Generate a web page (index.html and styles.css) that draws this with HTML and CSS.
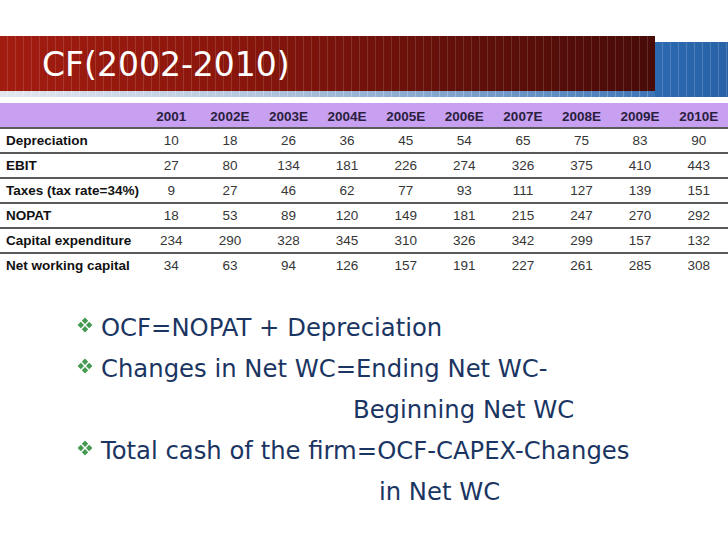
FILE: index.html
```html
<!DOCTYPE html>
<html lang="en">
<head>
<meta charset="utf-8">
<title>CF(2002-2010)</title>
<link rel="stylesheet" href="styles.css">
</head>
<body>
<div class="slide">
  <header class="banner">
    <div class="banner-main">
      <h1 class="title">CF(2002-2010)</h1>
      <div class="strip"></div>
    </div>
    <div class="banner-tab"></div>
  </header>

  <div class="table">
    <div class="row head">
      <span></span><span>2001</span><span>2002E</span><span>2003E</span><span>2004E</span><span>2005E</span><span>2006E</span><span>2007E</span><span>2008E</span><span>2009E</span><span>2010E</span>
    </div>
    <div class="row">
      <span class="label">Depreciation</span><span>10</span><span>18</span><span>26</span><span>36</span><span>45</span><span>54</span><span>65</span><span>75</span><span>83</span><span>90</span>
    </div>
    <div class="row">
      <span class="label">EBIT</span><span>27</span><span>80</span><span>134</span><span>181</span><span>226</span><span>274</span><span>326</span><span>375</span><span>410</span><span>443</span>
    </div>
    <div class="row">
      <span class="label">Taxes (tax rate=34%)</span><span>9</span><span>27</span><span>46</span><span>62</span><span>77</span><span>93</span><span>111</span><span>127</span><span>139</span><span>151</span>
    </div>
    <div class="row">
      <span class="label">NOPAT</span><span>18</span><span>53</span><span>89</span><span>120</span><span>149</span><span>181</span><span>215</span><span>247</span><span>270</span><span>292</span>
    </div>
    <div class="row">
      <span class="label">Capital expenditure</span><span>234</span><span>290</span><span>328</span><span>345</span><span>310</span><span>326</span><span>342</span><span>299</span><span>157</span><span>132</span>
    </div>
    <div class="row">
      <span class="label">Net working capital</span><span>34</span><span>63</span><span>94</span><span>126</span><span>157</span><span>191</span><span>227</span><span>261</span><span>285</span><span>308</span>
    </div>
  </div>

  <ul class="points">
    <li>
      <svg class="bullet" viewBox="0 0 16 16" aria-hidden="true"><path d="M8 0.6 L11.2 3.8 L8 7 L4.8 3.8 Z M3.8 4.8 L7 8 L3.8 11.2 L0.6 8 Z M12.2 4.8 L15.4 8 L12.2 11.2 L9 8 Z M8 9 L11.2 12.2 L8 15.4 L4.8 12.2 Z"/></svg>
      <span class="text">OCF=NOPAT + Depreciation</span>
    </li>
    <li>
      <svg class="bullet" viewBox="0 0 16 16" aria-hidden="true"><path d="M8 0.6 L11.2 3.8 L8 7 L4.8 3.8 Z M3.8 4.8 L7 8 L3.8 11.2 L0.6 8 Z M12.2 4.8 L15.4 8 L12.2 11.2 L9 8 Z M8 9 L11.2 12.2 L8 15.4 L4.8 12.2 Z"/></svg>
      <span class="text">Changes in Net WC=Ending Net WC-<span class="cont cont-1">Beginning Net WC</span></span>
    </li>
    <li>
      <svg class="bullet" viewBox="0 0 16 16" aria-hidden="true"><path d="M8 0.6 L11.2 3.8 L8 7 L4.8 3.8 Z M3.8 4.8 L7 8 L3.8 11.2 L0.6 8 Z M12.2 4.8 L15.4 8 L12.2 11.2 L9 8 Z M8 9 L11.2 12.2 L8 15.4 L4.8 12.2 Z"/></svg>
      <span class="text">Total cash of the firm=OCF-CAPEX-Changes<span class="cont cont-2">in Net WC</span></span>
    </li>
  </ul>
</div>
</body>
</html>
```

FILE: styles.css
```css
html, body {
  margin: 0;
  padding: 0;
  background: #ffffff;
}

.slide {
  width: 728px;
  height: 546px;
  overflow: hidden;
  box-sizing: border-box;
  padding-top: 36px;
  background: #ffffff;
}

/* ---------- banner ---------- */
.banner {
  display: flex;
  height: 61px;
}

.banner-main {
  width: 655px;
  display: flex;
  flex-direction: column;
}

.title {
  margin: 0;
  height: 55px;
  box-sizing: border-box;
  padding: 3px 0 0 42px;
  line-height: 52px;
  font-family: "DejaVu Sans", Verdana, sans-serif;
  font-size: 33px;
  font-weight: normal;
  color: #ffffff;
  background:
    repeating-linear-gradient(90deg, rgba(255,255,255,0) 0 7px, rgba(255,255,255,0.13) 7px 8px),
    linear-gradient(90deg, #a31c10 0%, #8a160c 35%, #62100a 70%, #480b07 100%);
}

.strip {
  height: 6px;
  background:
    repeating-linear-gradient(90deg, rgba(255,255,255,0) 0 7px, rgba(255,255,255,0.25) 7px 8px),
    linear-gradient(90deg, #e3e8ef 0%, #b9cadf 35%, #7fa2cc 70%, #3d74b6 100%);
}

.banner-tab {
  flex: 1;
  margin-top: 6px;
  height: 55px;
  background:
    repeating-linear-gradient(90deg, rgba(255,255,255,0) 0 7px, rgba(255,255,255,0.16) 7px 8px),
    linear-gradient(90deg, #2c69b0, #2862a8);
}

/* ---------- table ---------- */
.table {
  margin-top: 6px;
  font-family: "Liberation Sans", Arial, sans-serif;
  font-size: 13.5px;
}

.row {
  display: grid;
  grid-template-columns: 142px repeat(10, 1fr);
  height: 25px;
  box-sizing: border-box;
  border-top: 2px solid #5a5a5a;
  align-items: center;
}

.row span {
  text-align: center;
  color: #363636;
}

.row .label {
  text-align: left;
  padding-left: 6px;
  font-weight: bold;
  color: #111111;
}

.row.head {
  height: 24px;
  border-top: 0;
  background: #c7a0f2;
  align-items: end;
  padding-bottom: 3px;
  font-weight: bold;
}

.row.head span {
  color: #2b1e3e;
}

/* ---------- bullets ---------- */
.points {
  list-style: none;
  margin: 30px 0 0;
  padding: 0 0 0 77px;
  font-family: "DejaVu Sans", Verdana, sans-serif;
  font-size: 24.3px;
  line-height: 41px;
  color: #1b3562;
}

.points li {
  display: flex;
  gap: 8px;
}

.bullet {
  flex: none;
  width: 16px;
  height: 16px;
  margin-top: 10px;
  fill: #449a50;
}

.cont {
  display: block;
}

.cont-1 {
  padding-left: 252px;
}

.cont-2 {
  padding-left: 278px;
}
```
